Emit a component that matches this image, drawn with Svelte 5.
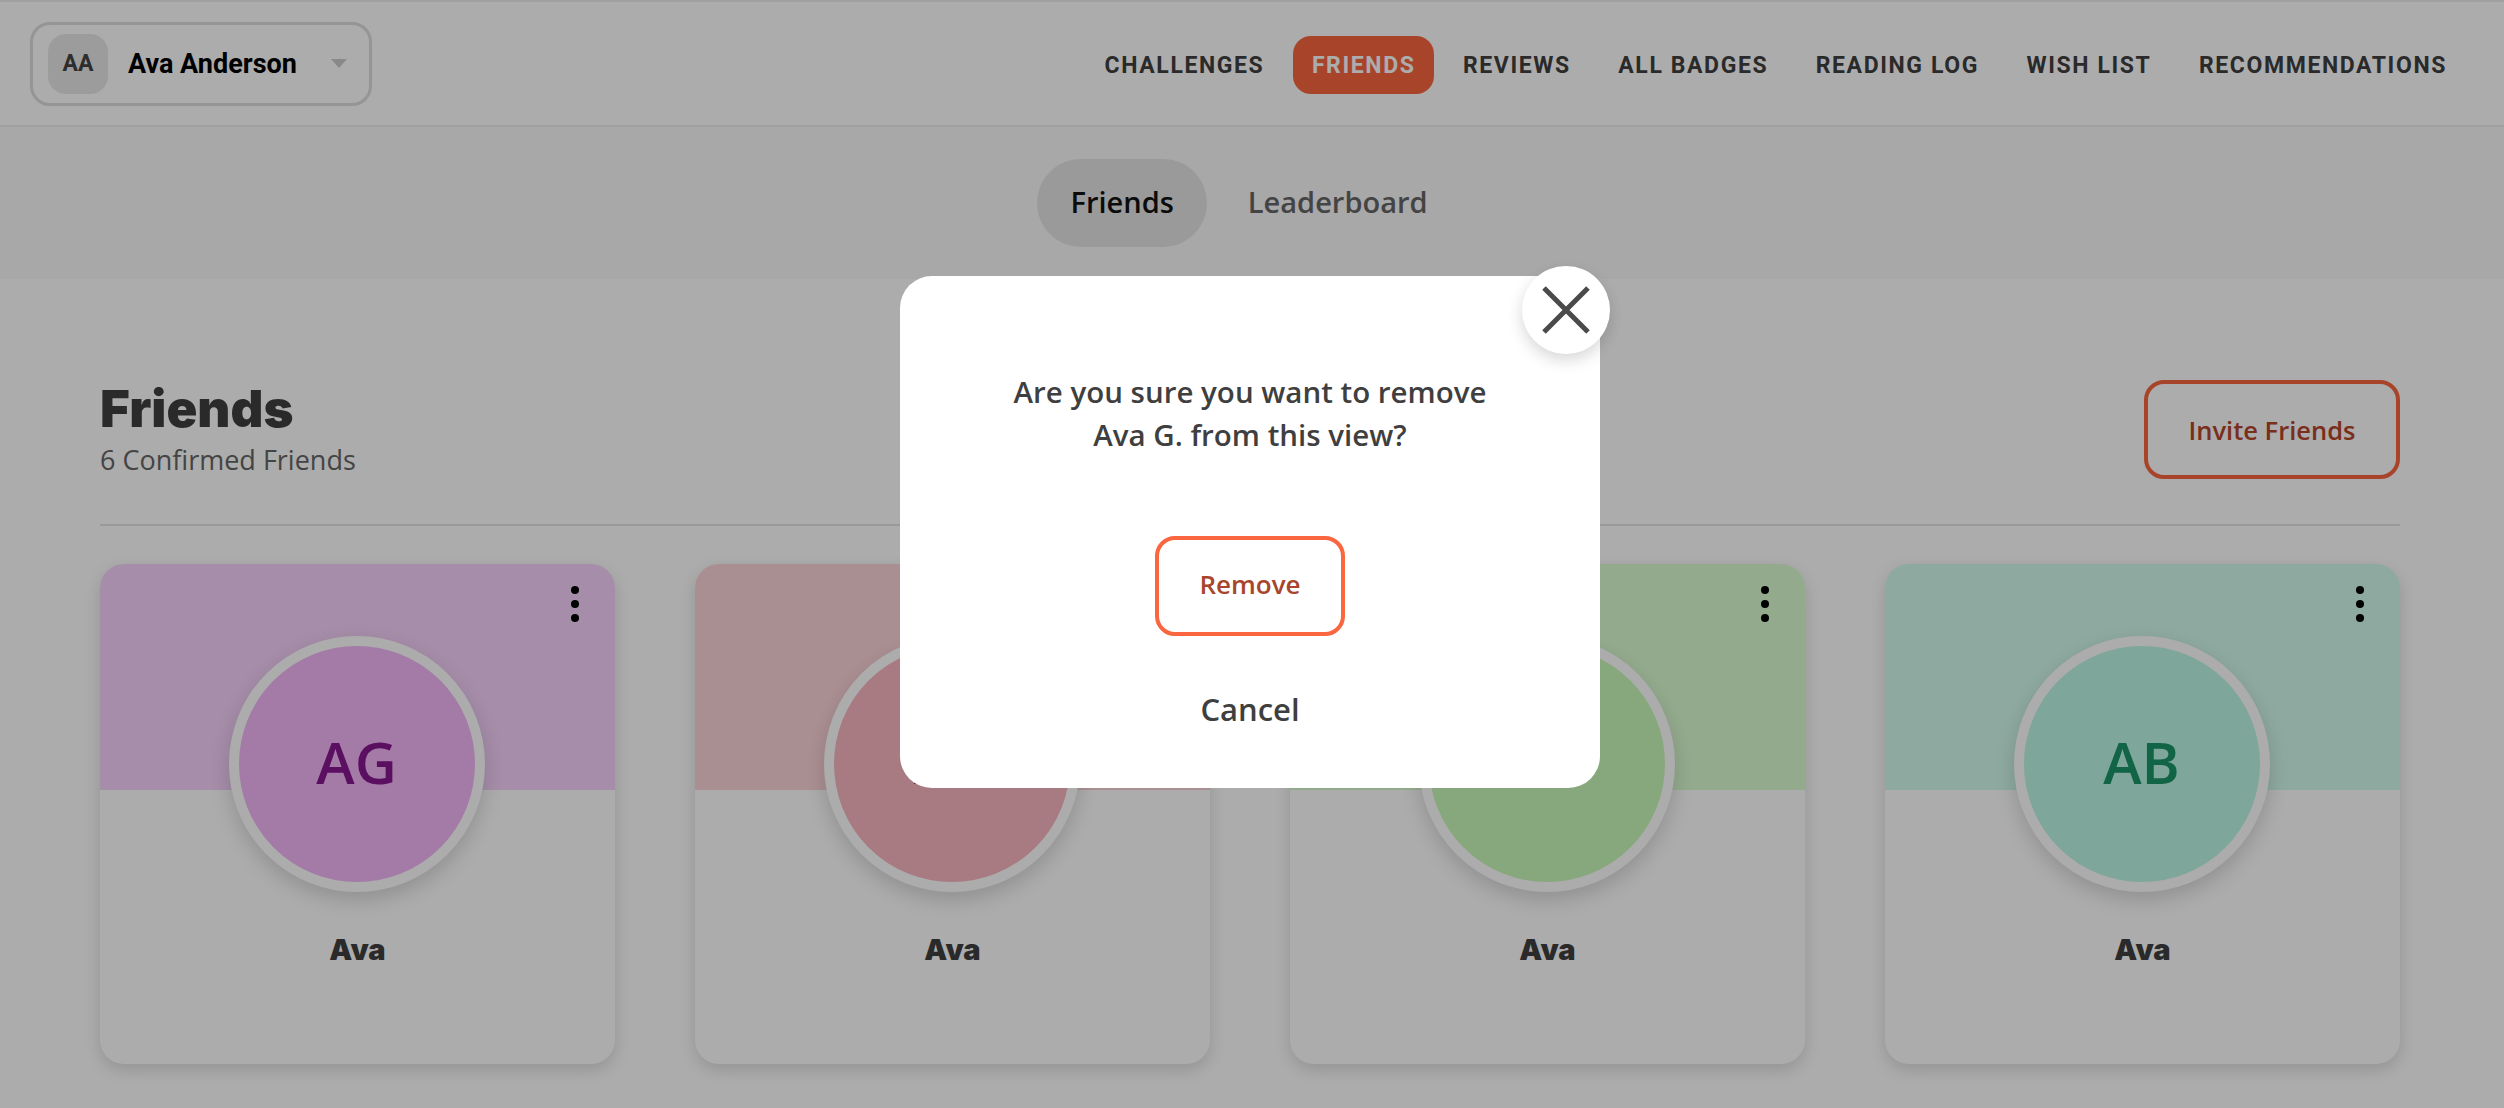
<script>
  const navItems = ["Challenges", "Friends", "Reviews", "All Badges", "Reading Log", "Wish List", "Recommendations"];

  // colours are the undimmed ones, the backdrop darkens them
  const friends = [
    { initials: "AG", head: "#f6d2fb", circle: "#f2b7f6", ink: "#87178f" },
    { initials: "AR", head: "#fdd5d9", circle: "#f8b7c0", ink: "#8f1727" },
    { initials: "AK", head: "#dcfdd2", circle: "#c9f9ba", ink: "#2a7a12" },
    { initials: "AB", head: "#d3fbee", circle: "#bcf7e4", ink: "#1a9468" },
  ];
</script>

<div class="page">
  <header class="topbar">
    <button class="account">
      <span class="account-avatar">AA</span>
      <span class="account-name">Ava Anderson</span>
      <span class="caret"></span>
    </button>
    <nav class="nav">
      {#each navItems as item}
        <a class="nav-item" class:active={item === "Friends"} href="#top">{item}</a>
      {/each}
    </nav>
  </header>

  <div class="tabs">
    <span class="tab selected">Friends</span>
    <span class="tab">Leaderboard</span>
  </div>

  <main class="content">
    <div class="title-row">
      <div>
        <h1>Friends</h1>
        <p class="count">6 Confirmed Friends</p>
      </div>
      <button class="outline invite">Invite Friends</button>
    </div>

    <div class="grid">
      {#each friends as friend}
        <article class="card">
          <div class="card-head" style="background: {friend.head}">
            <span class="dots"><i></i><i></i><i></i></span>
          </div>
          <div class="avatar" style="background: {friend.circle}; color: {friend.ink}">{friend.initials}</div>
          <div class="name">Ava</div>
        </article>
      {/each}
    </div>
  </main>
</div>

<div class="backdrop">
  <div class="modal">
    <button class="close" aria-label="Close">
      <svg width="48" height="48" viewBox="0 0 48 48">
        <path d="M2 2 L46 46 M46 2 L2 46" stroke="#4a4a4a" stroke-width="5" fill="none" />
      </svg>
    </button>
    <p class="question">Are you sure you want to remove<br />Ava G. from this view?</p>
    <button class="outline remove">Remove</button>
    <button class="cancel">Cancel</button>
  </div>
</div>

<style>
  :global(body) {
    margin: 0;
    background: #fff;
  }

  .page {
    height: 1108px;
    overflow: hidden;
    font-family: "Open Sans", sans-serif;
    color: #3f3f3f;
    border-top: 2px solid #eee;
    box-sizing: border-box;
  }

  button {
    font-family: inherit;
    background: none;
    border: none;
    padding: 0;
  }

  .topbar {
    height: 125px;
    box-sizing: border-box;
    border-bottom: 2px solid #eee;
    padding: 0 38px 0 30px;
    display: flex;
    align-items: center;
    justify-content: space-between;
  }

  .account {
    width: 342px;
    height: 84px;
    box-sizing: border-box;
    border: 3px solid #ddd;
    border-radius: 20px;
    display: flex;
    align-items: center;
    padding: 0 22px 0 15px;
    font-family: "Roboto", sans-serif;
  }

  .account-avatar {
    width: 60px;
    height: 60px;
    border-radius: 18px;
    background: #e7e7e7;
    color: #444;
    font-size: 23px;
    font-weight: 700;
    display: flex;
    align-items: center;
    justify-content: center;
  }

  .account-name {
    margin-left: 20px;
    font-size: 27px;
    font-weight: 700;
    color: #000;
    flex: 1;
    text-align: left;
  }

  .caret {
    width: 0;
    height: 0;
    border-left: 8.5px solid transparent;
    border-right: 8.5px solid transparent;
    border-top: 9px solid #ccc;
  }

  .nav {
    display: flex;
    gap: 9.5px;
    margin-top: 3px;
    font-family: "Roboto", sans-serif;
  }

  .nav-item {
    height: 58px;
    padding: 0 19px;
    border-radius: 18px;
    display: flex;
    align-items: center;
    font-size: 23px;
    font-weight: 700;
    letter-spacing: 1.6px;
    text-transform: uppercase;
    text-decoration: none;
    color: #3f3f3f;
  }

  .nav-item.active {
    background: #f9663f;
    color: #fff;
  }

  .tabs {
    height: 152px;
    background: #f9f9f9;
    display: flex;
    align-items: center;
    justify-content: center;
    gap: 8px;
    padding-right: 6px;
  }

  .tab {
    height: 88px;
    padding: 0 33px 3px;
    box-sizing: border-box;
    border-radius: 44px;
    display: flex;
    align-items: center;
    font-size: 29px;
    font-weight: 600;
    color: #666;
  }

  .tab.selected {
    background: #e4e4e4;
    color: #111;
  }

  .content {
    padding: 100px 104px 0 100px;
  }

  .title-row {
    display: flex;
    justify-content: space-between;
    align-items: flex-start;
    padding-bottom: 45px;
    border-bottom: 2px solid #e4e4e4;
  }

  h1 {
    margin: 0;
    font-family: "Inter", sans-serif;
    font-size: 51px;
    line-height: 60px;
    font-weight: 900;
    color: #3f3f3f;
  }

  .count {
    margin: 3px 0 0;
    font-size: 27px;
    line-height: 36px;
    font-weight: 500;
    color: #666;
  }

  .outline {
    box-sizing: border-box;
    border: 4px solid #f9663f;
    border-radius: 20px;
    font-size: 25.5px;
    font-weight: 600;
    color: #b5452a;
  }

  .invite {
    width: 256px;
    height: 99px;
    margin-top: 1px;
  }

  .grid {
    margin-top: 38px;
    display: grid;
    grid-template-columns: repeat(4, 1fr);
    gap: 80px;
  }

  .card {
    position: relative;
    height: 500px;
    border-radius: 24px;
    background: #fff;
    box-shadow: 0 6px 16px rgba(0, 0, 0, 0.14);
    display: flex;
    flex-direction: column;
    align-items: center;
    overflow: hidden;
  }

  .card-head {
    align-self: stretch;
    height: 226px;
    flex: none;
    position: relative;
  }

  .dots {
    position: absolute;
    top: 22px;
    right: 36px;
    display: flex;
    flex-direction: column;
    gap: 6px;
  }

  .dots i {
    width: 8px;
    height: 8px;
    border-radius: 50%;
    background: #000;
  }

  .avatar {
    width: 236px;
    height: 230px;
    padding-bottom: 6px;
    flex: none;
    margin-top: -154px;
    margin-left: -2px;
    border: 10px solid #fff;
    border-radius: 50%;
    box-shadow: 0 8px 20px rgba(0, 0, 0, 0.16);
    position: relative;
    display: flex;
    align-items: center;
    justify-content: center;
    font-size: 58px;
    font-weight: 600;
  }

  .name {
    margin-top: 40px;
    font-family: "Inter", sans-serif;
    font-size: 29px;
    font-weight: 900;
    color: #3f3f3f;
  }

  .backdrop {
    position: fixed;
    inset: 0;
    background: rgba(0, 0, 0, 0.325);
    display: flex;
    justify-content: center;
    align-items: flex-start;
    padding: 276px 4px 0 0;
    box-sizing: border-box;
    font-family: "Open Sans", sans-serif;
  }

  .modal {
    position: relative;
    width: 700px;
    height: 512px;
    box-sizing: border-box;
    background: #fff;
    border-radius: 32px;
    display: flex;
    flex-direction: column;
    align-items: center;
    padding-top: 94px;
  }

  .close {
    position: absolute;
    top: -10px;
    right: -10px;
    width: 88px;
    height: 88px;
    border-radius: 50%;
    background: #fff;
    box-shadow: 0 6px 16px rgba(0, 0, 0, 0.16);
    display: flex;
    align-items: center;
    justify-content: center;
  }

  .question {
    margin: 0;
    text-align: center;
    font-size: 29.5px;
    line-height: 43px;
    font-weight: 600;
    color: #3f3f3f;
  }

  .remove {
    margin-top: 80px;
    width: 190px;
    height: 100px;
    padding-bottom: 4px;
    color: #a8452c;
    font-size: 26px;
    font-weight: 600;
  }

  .cancel {
    margin-top: 52px;
    font-size: 31px;
    font-weight: 600;
    color: #3f3f3f;
  }
</style>
